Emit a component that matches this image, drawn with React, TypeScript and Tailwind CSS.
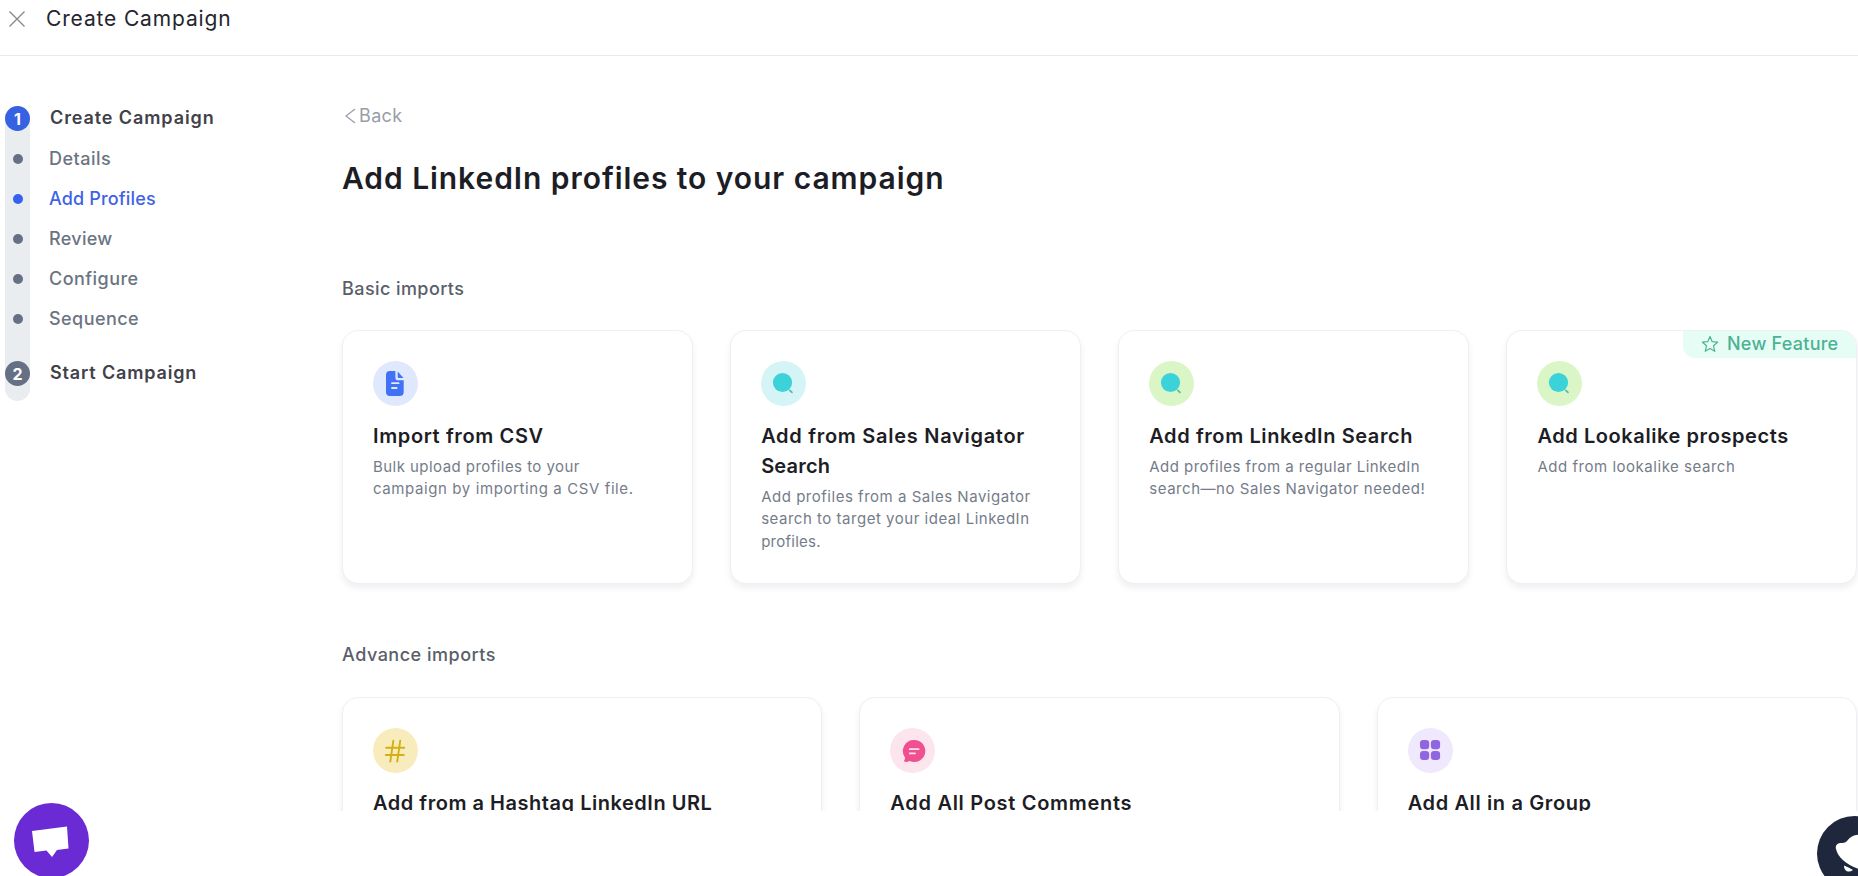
import type { ReactNode } from "react";
import clsx from "clsx";

type Line = { text: string; className: string };

type Card = {
  title: Line[];
  lines: Line[];
  circle: string;
  icon: ReactNode;
  isNew?: boolean;
};

const DocIcon = () => (
  <svg viewBox="0 0 45 45" className="size-[45px]">
    <path d="M17 10h5.4v6.4c0 2 .9 2.9 2.9 2.9h5.4V31c0 2.700-1.300 4-4 4H17c-2.700 0-4-1.300-4-4V14c0-2.700 1.300-4 4-4z" fill="#4172f5" />
    <path d="M24.700 10.400v5.200c0 1.100.4 1.500 1.500 1.500h4.300z" fill="#4172f5" />
    <path d="M19 22.200h6.600M19 27h4.600" stroke="#e0e8fe" strokeWidth="1.800" strokeLinecap="round" />
  </svg>
);

const SearchIcon = () => (
  <svg viewBox="0 0 45 45" className="size-[45px]">
    <circle cx="21.500" cy="21.500" r="9.600" fill="#3bd3d9" />
    <path d="M28.800 29.400l2.200 2" stroke="#4fb8ae" strokeWidth="1.600" strokeLinecap="round" />
  </svg>
);

const HashIcon = () => (
  <svg viewBox="0 0 45 45" className="size-[45px]">
    <path
      d="M20.300 12.800L17.300 33.600M27.200 12.800L24.200 33.600M13.200 19.700h18M12.800 27h18"
      fill="none"
      stroke="#d3ae14"
      strokeWidth="1.900"
      strokeLinecap="round"
    />
  </svg>
);

const CommentIcon = () => (
  <svg viewBox="0 0 45 45" className="size-[45px]">
    <path
      d="M24.200 12a11 11 0 1 1-4.700 20.900c-1.300.8-3 1.300-4.600.9-.9-.2-1-1-.5-1.700.6-.9.800-1.900.4-2.900A11 11 0 0 1 24.200 12z"
      fill="#f0508f"
    />
    <path d="M19.800 21.200h8.800M19.800 25.400h5.200" stroke="#fbe3ec" strokeWidth="1.800" strokeLinecap="round" />
  </svg>
);

const GridIcon = () => (
  <svg viewBox="0 0 45 45" className="size-[45px]" fill="#8f66e0">
    <rect x="12" y="12" width="9.200" height="9.200" rx="3.300" />
    <rect x="22.900" y="12" width="9.200" height="9.200" rx="3.300" />
    <rect x="12" y="22.900" width="9.200" height="9.200" rx="3.300" />
    <rect x="22.900" y="22.900" width="9.200" height="9.200" rx="3.300" />
  </svg>
);

const steps = [
  { label: "Details", className: "tracking-[0.5px]" },
  { label: "Add Profiles", className: "tracking-[0.15px]", active: true },
  { label: "Review", className: "tracking-[0.3px]" },
  { label: "Configure", className: "tracking-[0.45px]" },
  { label: "Sequence", className: "tracking-[0.45px]" },
];

const basicImports: Card[] = [
  {
    title: [{ text: "Import from CSV", className: "tracking-[0.62px]" }],
    lines: [
      { text: "Bulk upload profiles to your", className: "tracking-[0.45px]" },
      { text: "campaign by importing a CSV file.", className: "tracking-[0.6px]" },
    ],
    circle: "bg-[#e0e8fe]",
    icon: <DocIcon />,
  },
  {
    title: [
      { text: "Add from Sales Navigator", className: "tracking-[0.72px]" },
      { text: "Search", className: "tracking-[0.2px]" },
    ],
    lines: [
      { text: "Add profiles from a Sales Navigator", className: "tracking-[0.52px]" },
      { text: "search to target your ideal LinkedIn", className: "tracking-[0.52px]" },
      { text: "profiles.", className: "tracking-[0.25px]" },
    ],
    circle: "bg-[#d5f4f5]",
    icon: <SearchIcon />,
  },
  {
    title: [{ text: "Add from LinkedIn Search", className: "tracking-[0.6px]" }],
    lines: [
      { text: "Add profiles from a regular LinkedIn", className: "tracking-[0.47px]" },
      { text: "search—no Sales Navigator needed!", className: "tracking-[0.54px]" },
    ],
    circle: "bg-[#dbf6c6]",
    icon: <SearchIcon />,
  },
  {
    title: [{ text: "Add Lookalike prospects", className: "tracking-[0.58px]" }],
    lines: [{ text: "Add from lookalike search", className: "tracking-[0.53px]" }],
    circle: "bg-[#dbf6c6]",
    icon: <SearchIcon />,
    isNew: true,
  },
];

const advanceImports: Card[] = [
  {
    title: [{ text: "Add from a Hashtag LinkedIn URL", className: "tracking-[0.53px]" }],
    lines: [],
    circle: "bg-[#f9ecbc]",
    icon: <HashIcon />,
  },
  {
    title: [{ text: "Add All Post Comments", className: "tracking-[0.7px]" }],
    lines: [],
    circle: "bg-[#fce5ed]",
    icon: <CommentIcon />,
  },
  {
    title: [{ text: "Add All in a Group", className: "tracking-[0.63px]" }],
    lines: [],
    circle: "bg-[#f0e9fd]",
    icon: <GridIcon />,
  },
];

const TextLines = ({ lines }: { lines: Line[] }) =>
  lines.map((line) => (
    <span key={line.text} className={clsx("block whitespace-nowrap", line.className)}>
      {line.text}
    </span>
  ));

const ImportCard = ({ card }: { card: Card }) => (
  <div className="relative min-h-[254px] overflow-hidden rounded-2xl border border-[#f0f0f3] bg-white px-[30px] pt-[30px] shadow-[0_4px_6px_rgba(30,30,90,0.07)]">
    {card.isNew && (
      <div className="absolute -top-px -right-px flex h-7 w-[174px] items-center rounded-bl-xl bg-[#e6fdf6] pl-[18px] text-[#4db293]">
        <svg viewBox="0 0 18 18" className="size-[18px]" fill="none" stroke="currentColor" strokeWidth="1.200" strokeLinejoin="round">
          <path d="M9 1.600l2.200 5.100 5.400.5-4.100 3.600 1.300 5.500L9 13.400l-4.800 2.900 1.300-5.500-4.100-3.600 5.400-.5z" />
        </svg>
        <span className="ml-2 text-lg leading-7 font-medium whitespace-nowrap tracking-[0.25px]">New Feature</span>
      </div>
    )}
    <div className={clsx("size-[45px] rounded-full", card.circle)}>{card.icon}</div>
    <h3 className="mt-[15px] text-[20px] leading-[30px] font-semibold text-[#1d1d25]">
      <TextLines lines={card.title} />
    </h3>
    <p className="mt-[5px] text-[15px] leading-[22.4px] text-[#757c89]">
      <TextLines lines={card.lines} />
    </p>
  </div>
);

const Sidebar = () => (
  <aside className="w-[342px] shrink-0 pt-[50px] pl-[5px]">
    <ol className="relative h-[295px]">
      <li aria-hidden className="absolute inset-y-0 left-0 w-[25px] rounded-full bg-[#e9edf0]" />
      <li className="relative flex h-[25px] items-center">
        <span className="flex size-[25px] items-center justify-center rounded-full bg-[#3661e3] text-base font-bold text-white">1</span>
        <span className="ml-5 pb-px text-lg font-semibold tracking-[0.9px] text-[#414149]">Create Campaign</span>
      </li>
      <li className="relative pt-2">
        <ul>
          {steps.map((step) => (
            <li key={step.label} className={clsx("flex h-10 items-center", step.active ? "text-[#3f63e6]" : "text-[#6b7482]")}>
              <span className={clsx("ml-2 size-2.5 rounded-full", step.active ? "bg-[#3661f0]" : "bg-[#667085]")} />
              <span className={clsx("ml-[26px] pb-px text-lg font-medium", step.className)}>{step.label}</span>
            </li>
          ))}
        </ul>
      </li>
      <li className="relative mt-[22px] flex h-[25px] items-center">
        <span className="flex size-[25px] items-center justify-center rounded-full bg-[#667085] text-base font-bold text-white">2</span>
        <span className="ml-5 pb-px text-lg font-semibold tracking-[0.84px] text-[#414149]">Start Campaign</span>
      </li>
    </ol>
  </aside>
);

export default function App() {
  return (
    <div className="relative h-[876px] w-[1858px] overflow-hidden bg-white font-['Inter',sans-serif]">
      <header className="flex h-14 items-start border-b border-[#e9eaec] pl-[9px]">
        <svg viewBox="0 0 16 16" className="mt-[11px] size-4" fill="none" stroke="#85858a" strokeWidth="1.300">
          <path d="M.5.5l15 15M15.500.5l-15 15" />
        </svg>
        <h1 className="ml-[21px] pt-[5px] text-[21px] leading-7 tracking-[0.85px] text-[#25252d]">Create Campaign</h1>
      </header>

      <div className="flex h-[755px] overflow-hidden">
        <Sidebar />
        <main className="w-[1515px] shrink-0">
          <button className="mt-[46px] flex h-7 items-center pl-[3px] text-[#989da9]">
            <svg viewBox="0 0 11 16" className="h-4 w-[11px]" fill="none" stroke="currentColor" strokeWidth="1.200">
              <path d="M10 1L1 8l9 7" />
            </svg>
            <span className="ml-[3px] text-lg tracking-[0.35px]">Back</span>
          </button>
          <h2 className="mt-7 text-[30px] leading-10 font-semibold tracking-[0.94px] text-[#1d1d26]">
            Add LinkedIn profiles to your campaign
          </h2>

          <section className="mt-[77px]">
            <h4 className="text-lg leading-7 font-medium tracking-[0.42px] text-[#5a5e69]">Basic imports</h4>
            <div className="mt-[27px] grid grid-cols-4 gap-[37.5px]">
              {basicImports.map((card) => (
                <ImportCard key={card.title[0].text} card={card} />
              ))}
            </div>
          </section>

          <section className="mt-[57px]">
            <h4 className="text-lg leading-7 font-medium tracking-[0.51px] text-[#5a5e69]">Advance imports</h4>
            <div className="mt-7 grid grid-cols-3 gap-[37px]">
              {advanceImports.map((card) => (
                <ImportCard key={card.title[0].text} card={card} />
              ))}
            </div>
          </section>
        </main>
      </div>

      {/* floating chat launchers */}
      <button className="absolute top-[803px] left-[14px] size-[75px] rounded-full bg-[#6a2ad4]">
        <svg viewBox="0 0 75 75" className="size-full">
          <path d="M18 28l35-4.500 1.500 22L43 47l-5 7-5.500-6.500L20.500 49z" fill="#fff" />
        </svg>
      </button>
      <button className="absolute top-[816px] left-[1817px] size-[75px] rounded-full bg-[#1f273d]">
        <svg viewBox="0 0 75 75" className="size-full" fill="#fff">
          <path d="M45 19c-7-1-11 1-15 6-2 2-4 2-7 2-3 .5-5 3-4 6 2 9 12 17 26 21z" />
          <path d="M27 49.500c3 1 6 3 9 4.500-4 3-9 1.500-9-4.500z" />
        </svg>
      </button>
    </div>
  );
}
